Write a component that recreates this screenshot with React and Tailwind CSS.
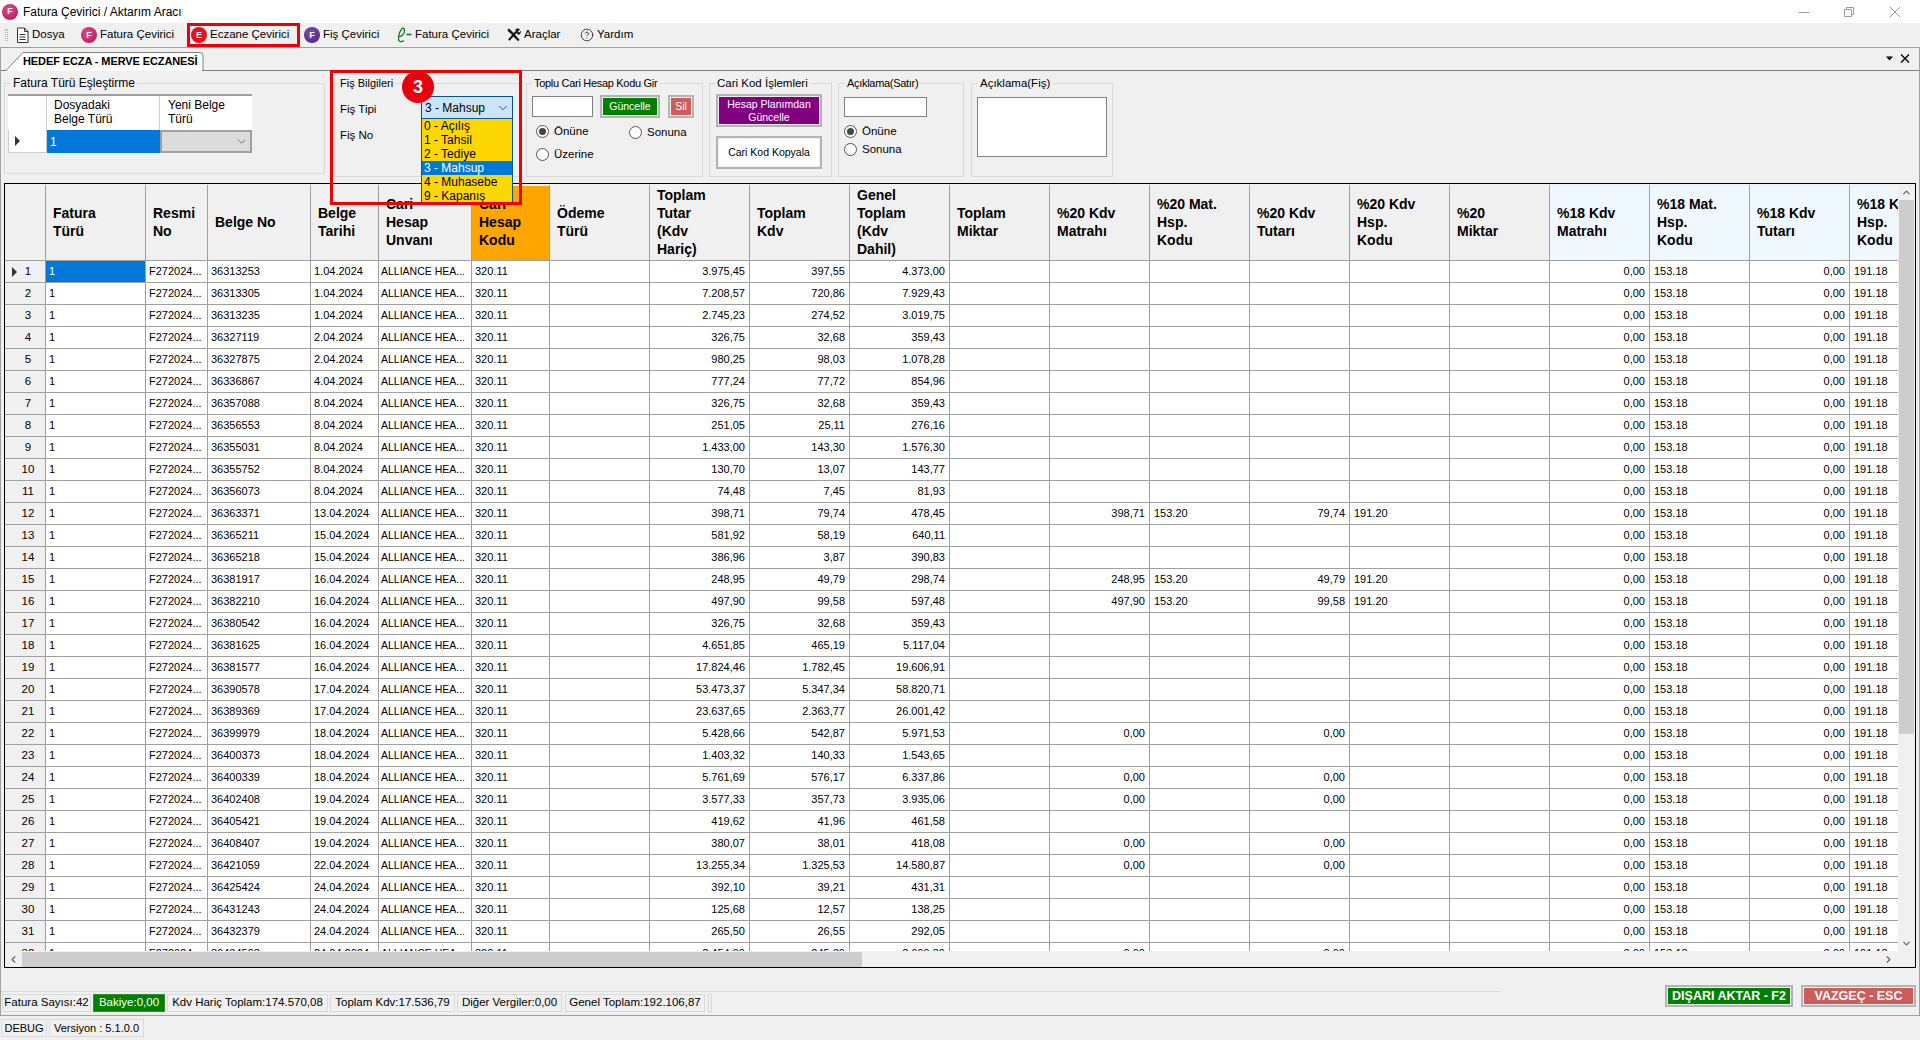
import React from "react";
import { ChevronDown, ChevronLeft, ChevronRight, ChevronUp, CircleHelp } from "lucide-react";

const headers = [
  ["Fatura\nTürü"], ["Resmi\nNo"], ["Belge No"], ["Belge\nTarihi"], ["Cari\nHesap\nUnvanı"], ["Cari\nHesap\nKodu", "bg-[#ffa500]"],
  ["Ödeme\nTürü"], ["Toplam\nTutar\n(Kdv\nHariç)"], ["Toplam\nKdv"], ["Genel\nToplam\n(Kdv\nDahil)"], ["Toplam\nMiktar"],
  ["%20 Kdv\nMatrahı"], ["%20 Mat.\nHsp.\nKodu"], ["%20 Kdv\nTutarı"], ["%20 Kdv\nHsp.\nKodu"], ["%20\nMiktar"],
  ["%18 Kdv\nMatrahı", "bg-[#f0f8ff]"], ["%18 Mat.\nHsp.\nKodu", "bg-[#f0f8ff]"], ["%18 Kdv\nTutarı", "bg-[#f0f8ff]"], ["%18 Kdv\nHsp.\nKodu", "bg-[#f0f8ff]"],
];

// belge no, tarih, tutar, kdv, genel, %20 bilgisi
const rows = [
  ["36313253", "1.04.2024", "3.975,45", "397,55", "4.373,00"],
  ["36313305", "1.04.2024", "7.208,57", "720,86", "7.929,43"],
  ["36313235", "1.04.2024", "2.745,23", "274,52", "3.019,75"],
  ["36327119", "2.04.2024", "326,75", "32,68", "359,43"],
  ["36327875", "2.04.2024", "980,25", "98,03", "1.078,28"],
  ["36336867", "4.04.2024", "777,24", "77,72", "854,96"],
  ["36357088", "8.04.2024", "326,75", "32,68", "359,43"],
  ["36356553", "8.04.2024", "251,05", "25,11", "276,16"],
  ["36355031", "8.04.2024", "1.433,00", "143,30", "1.576,30"],
  ["36355752", "8.04.2024", "130,70", "13,07", "143,77"],
  ["36356073", "8.04.2024", "74,48", "7,45", "81,93"],
  ["36363371", "13.04.2024", "398,71", "79,74", "478,45", ["398,71", "153.20", "79,74", "191.20"]],
  ["36365211", "15.04.2024", "581,92", "58,19", "640,11"],
  ["36365218", "15.04.2024", "386,96", "3,87", "390,83"],
  ["36381917", "16.04.2024", "248,95", "49,79", "298,74", ["248,95", "153.20", "49,79", "191.20"]],
  ["36382210", "16.04.2024", "497,90", "99,58", "597,48", ["497,90", "153.20", "99,58", "191.20"]],
  ["36380542", "16.04.2024", "326,75", "32,68", "359,43"],
  ["36381625", "16.04.2024", "4.651,85", "465,19", "5.117,04"],
  ["36381577", "16.04.2024", "17.824,46", "1.782,45", "19.606,91"],
  ["36390578", "17.04.2024", "53.473,37", "5.347,34", "58.820,71"],
  ["36389369", "17.04.2024", "23.637,65", "2.363,77", "26.001,42"],
  ["36399979", "18.04.2024", "5.428,66", "542,87", "5.971,53", ["0,00", "", "0,00", ""]],
  ["36400373", "18.04.2024", "1.403,32", "140,33", "1.543,65"],
  ["36400339", "18.04.2024", "5.761,69", "576,17", "6.337,86", ["0,00", "", "0,00", ""]],
  ["36402408", "19.04.2024", "3.577,33", "357,73", "3.935,06", ["0,00", "", "0,00", ""]],
  ["36405421", "19.04.2024", "419,62", "41,96", "461,58"],
  ["36408407", "19.04.2024", "380,07", "38,01", "418,08", ["0,00", "", "0,00", ""]],
  ["36421059", "22.04.2024", "13.255,34", "1.325,53", "14.580,87", ["0,00", "", "0,00", ""]],
  ["36425424", "24.04.2024", "392,10", "39,21", "431,31"],
  ["36431243", "24.04.2024", "125,68", "12,57", "138,25"],
  ["36432379", "24.04.2024", "265,50", "26,55", "292,05"],
  ["36434598", "24.04.2024", "2.454,00", "245,39", "2.699,39", ["0,00", "", "0,00", ""]],
];

const fisTipleri = ["0 - Açılış", "1 - Tahsil", "2 - Tediye", "3 - Mahsup", "4 - Muhasebe", "9 - Kapanış"];

function RoundIcon({ letter, className }) {
  return (
    <span className={`flex h-[16px] w-[16px] shrink-0 items-center justify-center rounded-full text-[9px] font-bold leading-none text-white ${className}`}>
      {letter}
    </span>
  );
}

function MenuItem({ icon, label, className }) {
  return (
    <div className={`flex h-[24px] items-center text-[11.500px] ${className}`}>
      {icon}
      <span className="ml-[3px]">{label}</span>
    </div>
  );
}

function DocIcon() {
  return (
    <svg width="13" height="17" viewBox="1 0 13 17" fill="none" stroke="#333" strokeWidth="1">
      <path d="M2.500 1h7l3.500 3.500v11h-10.500z" fill="#fff" />
      <path d="M9.500 1v3.500H13M4.500 7.500h6M4.500 10h6M4.500 12.500h6" />
    </svg>
  );
}

function ToolsIcon() {
  return (
    <svg width="15" height="16" viewBox="0 0 16 16" fill="none" stroke="#111">
      <path d="M3 13.500 11 4.500" strokeWidth="2.200" />
      <path d="M10 2.500c1.500-1.500 3.500-1.300 4.500-.5l-2 2 .5 1 1 .5 1.500-1.500c.5 1.500-.500 3.500-3 3.500" fill="#111" strokeWidth="0.600" />
      <path d="M2 2l1.500-.5L7 5l3.500 4 3.500 4-1 1.500-3.500-3.500L6 7 2.500 4z" fill="#111" strokeWidth="0.600" />
    </svg>
  );
}

function EIcon() {
  return (
    <svg width="16" height="18" viewBox="0 0 16 18" fill="none" stroke="#0c7a1e" strokeWidth="1.300">
      <path d="M2.500 10.500c3 .3 6-2.500 6-6 0-2-1.500-3-2.700-1.700C4 5 2.500 10 2.500 13c0 3 3 3.500 5.500 1.500" />
      <path d="M10.500 8.500h5" strokeWidth="1.600" />
    </svg>
  );
}

function Radio({ label, checked, className = "" }) {
  return (
    <div className={`flex h-[13px] items-center text-[11.500px] ${className}`}>
      <span className="flex h-[13px] w-[13px] items-center justify-center rounded-full border border-[#555] bg-white">
        {checked ? <span className="h-[7px] w-[7px] rounded-full bg-[#444]" /> : null}
      </span>
      <span className="ml-[5px]">{label}</span>
    </div>
  );
}

function ColorButton({ children, fill, className = "" }) {
  return (
    <button type="button" className={`block border-2 border-[#b4b4b4] p-[1px] ${className}`}>
      <span className={`flex h-full w-full items-center justify-center text-center ${fill}`}>{children}</span>
    </button>
  );
}

function Group({ title, legendClass, className, children }) {
  return (
    <fieldset className={`shrink-0 border border-[#d9d9d9] ${className}`}>
      <legend className={`h-[14px] px-[2px] leading-[14px] ${legendClass}`}>{title}</legend>
      {children}
    </fieldset>
  );
}

function TitleBar() {
  return (
    <div className="flex h-[23px] shrink-0 items-center bg-white pl-[2px]">
      <RoundIcon letter="F" className="h-[15px] w-[15px] bg-[radial-gradient(circle_at_40%_35%,#e24a86,#b01060)]" />
      <span className="ml-[5px]">Fatura Çevirici / Aktarım Aracı</span>
      <svg width="144" height="14" viewBox="0 0 144 14" fill="none" stroke="#9a9a9a" className="ml-auto">
        <path d="M23 7.500h10" />
        <path d="M68.500 4.500h7v7h-7zM70.500 4.500v-2h7v7h-2" />
        <path d="M114 2l10 10M124 2l-10 10" />
      </svg>
    </div>
  );
}

function MenuBar() {
  return (
    <div className="flex h-[24px] shrink-0 items-center pl-[5px]">
      <span className="mr-[8px] h-[12px] w-[3px] border-x border-dotted border-[#aaa]" />
      <MenuItem className="w-[65px]" icon={<DocIcon />} label="Dosya" />
      <MenuItem className="w-[106px]" icon={<RoundIcon letter="F" className="bg-[radial-gradient(circle_at_40%_35%,#e24a86,#b01060)]" />} label="Fatura Çevirici" />
      <MenuItem className="w-[113px] border-[3px] border-[#e8000b] pl-[1px]" icon={<RoundIcon letter="E" className="bg-[#e60f1e]" />} label="Eczane Çevirici" />
      <MenuItem className="ml-[4px] w-[92px]" icon={<RoundIcon letter="F" className="bg-[radial-gradient(circle_at_40%_35%,#7a4fb0,#46236f)]" />} label="Fiş Çevirici" />
      <MenuItem className="w-[110px]" icon={<EIcon />} label="Fatura Çevirici" />
      <MenuItem className="w-[74px]" icon={<ToolsIcon />} label="Araçlar" />
      <MenuItem icon={<CircleHelp size={14} strokeWidth={1.400} color="#222" />} label="Yardım" />
    </div>
  );
}

function TabStrip() {
  return (
    <div className="relative flex h-[23px] shrink-0 items-center justify-end border-b border-[#808080] pr-[5px]">
      <div className="absolute left-[5px] top-[4px] h-[19px] w-[198px]">
        <svg width="198" height="19" viewBox="0 0 198 19" className="absolute inset-0">
          <path d="M0 18.500 17 .5H194a3 3 0 0 1 3 3V18" fill="#fff" stroke="#808080" />
          <path d="M1 18.500H196" stroke="#fff" />
        </svg>
        <span className="absolute left-[17px] top-[1px] whitespace-nowrap text-[11px] font-bold leading-[17px] tracking-[-0.1px]">HEDEF ECZA - MERVE ECZANESİ</span>
      </div>
      <svg width="28" height="12" viewBox="0 0 28 12" className="stroke-black">
        <path d="M0 3.500h7L3.500 7.500z" fill="#000" stroke="none" />
        <path d="M15 1.500l8 8M23 1.500l-8 8" strokeWidth="1.300" fill="none" />
      </svg>
    </div>
  );
}

function FilterPanel() {
  return (
    <div className="flex h-[112px] shrink-0 items-start pl-[3px] pt-[5px]">
      <Group title="Fatura Türü Eşleştirme" legendClass="ml-[6px]" className="h-[98px] w-[321px]">
        <div className="ml-[3px] mt-[4px] grid w-[244px] grid-cols-[39px_113px_92px] grid-rows-[34px_23px] border-t-2 border-[#a0a0a0]">
          <div className="border-r border-[#d0d0d0] bg-white" />
          <div className="border-r border-[#d0d0d0] bg-white pl-[7px] pt-[2px] leading-[14px] whitespace-pre-line">{"Dosyadaki\nBelge Türü"}</div>
          <div className="bg-white pl-[8px] pt-[2px] leading-[14px] whitespace-pre-line">{"Yeni Belge\nTürü"}</div>
          <div className="flex items-center border border-t-0 border-[#d0d0d0] bg-white pl-[6px]">
            <span className="h-0 w-0 border-y-[5px] border-l-[5px] border-y-transparent border-l-[#333]" />
          </div>
          <div className="flex items-center bg-[#0078d7] pl-[3px] text-white">1</div>
          <div className="flex items-center justify-end border-2 border-[#a0a0a0] bg-[#dcdcdc] pr-[2px]">
            <ChevronDown size={13} strokeWidth={1.400} color="#555" />
          </div>
        </div>
      </Group>

      <Group title="Fiş Bilgileri" legendClass="ml-[3px] text-[11px]" className="ml-[9px] h-[101px] w-[186px]">
        <div className="flex">
          <div className="ml-[5px] w-[81px] text-[11.500px]">
            <div className="mt-[12px] h-[14px] leading-[14px]">Fiş Tipi</div>
            <div className="mt-[12px] h-[14px] leading-[14px]">Fiş No</div>
          </div>
          <div className="relative mt-[6px] h-[23px] w-[92px] border border-[#005499] bg-[#cce4f7]">
            <div className="flex h-full items-center justify-between pl-[3px] pr-[2px]">
              <span>3 - Mahsup</span>
              <ChevronDown size={14} strokeWidth={1.300} color="#222" />
            </div>
            <div className="absolute -left-[1px] top-[21px] z-10 w-[92px] border border-[#0a5a9a] bg-[#ffd700]">
              {fisTipleri.map((item) => (
                <div key={item} className={`h-[14px] whitespace-nowrap pl-[2px] leading-[14px] ${item.startsWith("3") ? "bg-[#0078d7] text-white" : ""}`}>
                  {item}
                </div>
              ))}
            </div>
          </div>
        </div>
      </Group>

      <Group title="Toplu Cari Hesap Kodu Gir" legendClass="ml-[5px] text-[11px] tracking-[-0.3px]" className="ml-[6px] h-[101px] w-[177px]">
        <div className="ml-[5px] mt-[5px] flex items-start text-[10.500px]">
          <input className="mt-[1px] h-[21px] w-[61px] border border-[#808080] bg-white" />
          <ColorButton fill="bg-[#008000] text-white" className="ml-[7px] h-[23px] w-[60px]">Güncelle</ColorButton>
          <ColorButton fill="bg-[#cd5c5c] text-white" className="ml-[8px] h-[23px] w-[26px]">Sil</ColorButton>
        </div>
        <div className="ml-[9px] mt-[7px] flex">
          <Radio label="Önüne" checked className="w-[93px]" />
          <Radio label="Sonuna" className="mt-[1px]" />
        </div>
        <Radio label="Üzerine" className="ml-[9px] mt-[9px]" />
      </Group>

      <Group title="Cari Kod İşlemleri" legendClass="ml-[5px] text-[11.500px]" className="ml-[6px] h-[101px] w-[123px]">
        <ColorButton fill="bg-[#800080] text-white leading-[13px] text-[10.500px]" className="ml-[6px] mt-[4px] h-[33px] w-[106px]">
          Hesap Planımdan<br />Güncelle
        </ColorButton>
        <ColorButton fill="bg-white text-[10.500px]" className="ml-[6px] mt-[9px] h-[33px] w-[106px]">Cari Kod Kopyala</ColorButton>
      </Group>

      <Group title="Açıklama(Satır)" legendClass="ml-[6px] text-[11px] tracking-[-0.3px]" className="ml-[6px] h-[101px] w-[126px]">
        <input className="ml-[5px] mt-[7px] block h-[20px] w-[83px] border border-[#808080] bg-white" />
        <Radio label="Önüne" checked className="ml-[5px] mt-[8px]" />
        <Radio label="Sonuna" className="ml-[5px] mt-[5px]" />
      </Group>

      <Group title="Açıklama(Fiş)" legendClass="ml-[6px] text-[11.500px]" className="ml-[7px] h-[101px] w-[142px]">
        <textarea className="ml-[5px] mt-[7px] block h-[60px] w-[130px] resize-none border border-[#808080] bg-white" />
      </Group>
    </div>
  );
}

function DataGrid() {
  const cellBase = "h-[22px] overflow-hidden whitespace-nowrap border-b border-r border-[#a0a0a0] bg-white text-[11px] leading-[21px]";
  return (
    <div className="ml-[3px] flex h-[785px] w-[1912px] shrink-0 flex-col border border-black bg-white">
      <div className="flex h-[767px] shrink-0">
        <div className="h-[767px] w-[1893px] overflow-hidden">
          <table className="w-[1945px] table-fixed border-separate border-spacing-0">
            <colgroup>
              <col className="w-[41px]" />
              <col className="w-[100px]" />
              <col className="w-[62px]" />
              <col className="w-[103px]" />
              <col className="w-[68px]" />
              <col className="w-[93px]" />
              <col className="w-[78px]" />
              {headers.slice(6).map(([label]) => (
                <col key={label} className="w-[100px]" />
              ))}
            </colgroup>
            <thead>
              <tr>
                <th className="h-[77px] border-b border-r border-t-2 border-[#a0a0a0] border-t-[#f0f0f0] bg-[#f0f0f0]" />
                {headers.map(([label, bg]) => (
                  <th
                    key={label}
                    className={`h-[77px] overflow-hidden whitespace-pre-line border-b border-r border-t-2 border-[#a0a0a0] border-t-[#f0f0f0] pb-[2px] pl-[7px] text-left text-[14px] font-bold leading-[18px] ${bg || "bg-[#f0f0f0]"}`}
                  >
                    {label}
                  </th>
                ))}
              </tr>
            </thead>
            <tbody>
              {rows.map(([belge, tarih, tutar, kdv, genel, kdv20], i) => (
                <tr key={belge}>
                  <td className="h-[22px] border-b border-r border-[#a0a0a0] bg-[#f0f0f0] text-[11.500px]">
                    <div className="flex items-center pl-[7px]">
                      <span className={`h-0 w-0 border-y-[5px] border-l-[5px] border-y-transparent ${i === 0 ? "border-l-[#333]" : "border-l-transparent"}`} />
                      <span className="w-[22px] text-center">{i + 1}</span>
                    </div>
                  </td>
                  <td className={`${cellBase} pl-[3px] ${i === 0 ? "!bg-[#0078d7] text-white" : ""}`}>1</td>
                  <td className={`${cellBase} pl-[3px]`}>F272024...</td>
                  <td className={`${cellBase} pl-[3px]`}>{belge}</td>
                  <td className={`${cellBase} pl-[3px]`}>{tarih}</td>
                  <td className={`${cellBase} pl-[2px] !text-[10.500px]`}>ALLIANCE HEA...</td>
                  <td className={`${cellBase} pl-[3px]`}>320.11</td>
                  <td className={cellBase} />
                  <td className={`${cellBase} pr-[4px] text-right`}>{tutar}</td>
                  <td className={`${cellBase} pr-[4px] text-right`}>{kdv}</td>
                  <td className={`${cellBase} pr-[4px] text-right`}>{genel}</td>
                  <td className={cellBase} />
                  <td className={`${cellBase} pr-[4px] text-right`}>{kdv20?.[0]}</td>
                  <td className={`${cellBase} pl-[4px]`}>{kdv20?.[1]}</td>
                  <td className={`${cellBase} pr-[4px] text-right`}>{kdv20?.[2]}</td>
                  <td className={`${cellBase} pl-[4px]`}>{kdv20?.[3]}</td>
                  <td className={cellBase} />
                  <td className={`${cellBase} pr-[4px] text-right`}>0,00</td>
                  <td className={`${cellBase} pl-[4px]`}>153.18</td>
                  <td className={`${cellBase} pr-[4px] text-right`}>0,00</td>
                  <td className={`${cellBase} pl-[4px]`}>191.18</td>
                </tr>
              ))}
            </tbody>
          </table>
        </div>
        <div className="flex w-[17px] shrink-0 flex-col items-center bg-[#f0f0f0]">
          <div className="flex h-[16px] items-center justify-center">
            <ChevronUp size={11} strokeWidth={2.500} color="#606060" />
          </div>
          <div className="h-[534px] w-[15px] bg-[#cdcdcd]" />
          <div className="mt-auto flex h-[16px] items-center justify-center">
            <ChevronDown size={11} strokeWidth={2.500} color="#606060" />
          </div>
        </div>
      </div>
      <div className="flex h-[16px] flex-1 items-center bg-[#f0f0f0]">
        <div className="flex w-[17px] shrink-0 justify-center">
          <ChevronLeft size={11} strokeWidth={2.500} color="#606060" />
        </div>
        <div className="h-[15px] w-[840px] bg-[#cdcdcd]" />
        <div className="ml-auto mr-[18px] flex w-[17px] justify-center">
          <ChevronRight size={11} strokeWidth={2.500} color="#606060" />
        </div>
      </div>
    </div>
  );
}

function StatusCell({ children, className = "" }) {
  return (
    <div className={`flex h-[18px] shrink-0 items-center justify-center border border-[#dadada] bg-[#f0f0f0] text-[11.500px] whitespace-nowrap ${className}`}>
      {children}
    </div>
  );
}

function Footer() {
  return (
    <div className="flex h-[47px] shrink-0 items-start">
      <div className="mt-[23px] h-[24px] w-[1500px] border-t border-[#d8d8d8]">
        <div className="ml-[1px] mt-[2px] flex gap-[2px]">
          <StatusCell className="w-[89px]">Fatura Sayısı:42</StatusCell>
          <StatusCell className="w-[72px] !border-[#2e8b2e] !bg-[#008000] text-white">Bakiye:0,00</StatusCell>
          <StatusCell className="w-[161px]">Kdv Hariç Toplam:174.570,08</StatusCell>
          <StatusCell className="w-[125px]">Toplam Kdv:17.536,79</StatusCell>
          <StatusCell className="w-[105px]">Diğer Vergiler:0,00</StatusCell>
          <StatusCell className="ml-[1px] w-[140px]">Genel Toplam:192.106,87</StatusCell>
          <StatusCell className="ml-[1px] w-[4px]" />
        </div>
      </div>
      <div className="ml-auto mr-[3px] mt-[17px] flex gap-[8px] text-[12.500px] font-bold">
        <ColorButton fill="bg-[#008000] text-white" className="h-[22px] w-[128px]">DIŞARI AKTAR - F2</ColorButton>
        <ColorButton fill="bg-[#cd5c5c] text-white" className="h-[22px] w-[115px]">VAZGEÇ - ESC</ColorButton>
      </div>
    </div>
  );
}

export default function App() {
  return (
    <div className="relative flex h-[1040px] w-[1920px] flex-col overflow-hidden bg-[#f0f0f0] font-['Liberation_Sans',sans-serif] text-[12px] text-black">
      <TitleBar />
      <MenuBar />
      <div className="flex h-[969px] shrink-0 flex-col border border-[#a0a0a0]">
        <TabStrip />
        <FilterPanel />
        <DataGrid />
        <Footer />
      </div>
      <div className="flex flex-1 gap-[2px] pl-[1px] pt-[3px]">
        <StatusCell className="w-[46px] !text-[11px]">DEBUG</StatusCell>
        <StatusCell className="w-[95px] !text-[11px]">Versiyon : 5.1.0.0</StatusCell>
      </div>

      {/* anlatım işaretleri: kırmızı çerçeve ve numara */}
      <div className="absolute left-[330px] top-[70px] z-20 h-[135px] w-[192px] border-[3px] border-[#f00000]" />
      <div className="absolute left-[402px] top-[71px] z-30 flex h-[32px] w-[32px] items-center justify-center rounded-full bg-[#e8000f] text-[18px] font-bold text-white">
        3
      </div>
    </div>
  );
}
